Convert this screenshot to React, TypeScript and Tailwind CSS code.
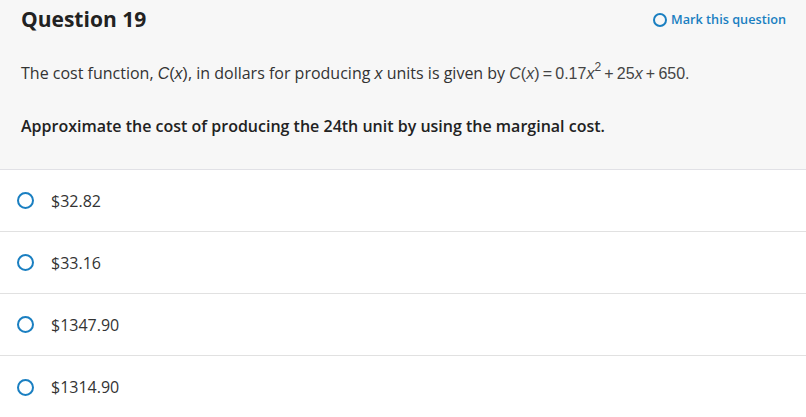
export default function App() {
  const options = ["$32.82", "$33.16", "$1347.90", "$1314.90"]

  return (
    <div className="w-[806px] h-[417px] overflow-hidden bg-white text-[#222] font-['Open_Sans',sans-serif]">
      {/* question header */}
      <div className="h-[170px] bg-[#f7f7f7] border-b border-[#e1e1e6] px-[21px]">
        <div className="flex items-center justify-between h-[40px]">
          <h1 className="text-[21px] font-bold text-[#222]">Question 19</h1>
          <button className="flex items-center gap-[4px] text-[12.7px] font-semibold text-[#1a7fc1] mr-[-1px]">
            <span className="inline-block w-[14px] h-[14px] rounded-full border-2 border-[#1a7fc1]" />
            Mark this question
          </button>
        </div>

        <p className="mt-[21px] text-[16px] leading-[24px] text-[#333]">
          The cost function, <span className="italic font-['Liberation_Sans',sans-serif]">C</span>
          <span className="font-['Liberation_Sans',sans-serif]">(<i>x</i>)</span>, in dollars for producing{" "}
          <i className="font-['Liberation_Sans',sans-serif]">x</i> units is given by{" "}
          <span className="font-['Liberation_Sans',sans-serif] text-[#444]">
            <i>C</i>(<i>x</i>)&thinsp;=&thinsp;0.17<i>x</i>
            <sup className="text-[12px] top-[-0.65em]">2</sup>&thinsp;+&thinsp;25<i>x</i>&thinsp;+&thinsp;650.
          </span>
        </p>

        <p className="mt-[28px] text-[16px] leading-[24px] font-semibold text-[#222]">
          Approximate the cost of producing the 24th unit by using the marginal cost.
        </p>
      </div>

      {/* answer options */}
      <div>
        {options.map((o) => (
          <label
            key={o}
            className="flex items-center h-[62px] border-b border-[#e1e1e1] last:border-b-0 pl-[17px]"
          >
            <span className="inline-block w-[17px] h-[17px] rounded-full border-2 border-[#1a7fc1]" />
            <span className="ml-[17px] text-[16px] text-[#333]">{o}</span>
          </label>
        ))}
      </div>
    </div>
  )
}
